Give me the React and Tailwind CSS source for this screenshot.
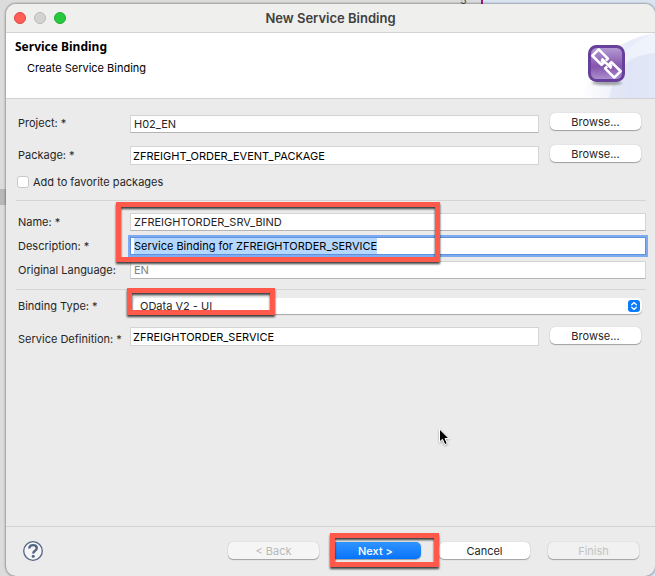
import { useEffect, useRef } from "react";

function Highlight({ className }) {
  return (
    <div
      aria-hidden="true"
      className={`pointer-events-none absolute z-10 border-5 border-[#ff594c] drop-shadow-[0_2px_1px_rgba(0,0,0,0.75)] ${className}`}
    />
  );
}

function Label({ htmlFor, children }) {
  return (
    <label htmlFor={htmlFor} className="w-[114px] shrink-0 self-center pl-0.5 whitespace-nowrap">
      {children}
    </label>
  );
}

function Field({ className = "", ...props }) {
  return (
    <input
      type="text"
      className={`min-w-0 flex-1 border border-[#d4d4d4] bg-white outline-none ${className}`}
      {...props}
    />
  );
}

function PushButton({ className = "bg-white text-[#262626]", ...props }) {
  return (
    <button
      type="button"
      className={`h-[17px] w-[91px] shrink-0 rounded-[5px] text-center leading-4 shadow-[0_1px_1px_rgba(0,0,0,0.3),0_0_1px_rgba(0,0,0,0.25)] ${className}`}
      {...props}
    />
  );
}

function BindingIcon() {
  return (
    <svg className="absolute top-0 right-0 h-full w-[76px]" viewBox="0 0 76 65" aria-hidden="true">
      <defs>
        <linearGradient id="wave" x1="0" x2="1">
          <stop offset="0" stopColor="#fff" />
          <stop offset="0.65" stopColor="#dfe5f6" />
          <stop offset="1" stopColor="#e9edf9" />
        </linearGradient>
        <linearGradient id="tile" x1="0" y1="0" x2="0" y2="1">
          <stop offset="0" stopColor="#b7a0d5" />
          <stop offset="0.5" stopColor="#8c60b4" />
          <stop offset="0.6" stopColor="#8656ad" />
          <stop offset="1" stopColor="#b096d3" />
        </linearGradient>
        <filter id="soft" x="-20%" y="-100%" width="140%" height="300%">
          <feGaussianBlur stdDeviation="1" />
        </filter>
      </defs>
      <path d="M2 65C8 35 36 6 76 0V65Z" fill="url(#wave)" opacity="0.75" />
      <path d="M30 65C35 38 50 22 76 20V65Z" fill="#d9e0f4" opacity="0.55" />
      <path d="M42 23C52 12 62 5 76 0V20C61 21 48 26 40 34Z" fill="#f0f3fc" opacity="0.7" />
      <ellipse cx="28" cy="50" rx="15" ry="2" fill="#777" opacity="0.7" filter="url(#soft)" />
      <rect x="10.5" y="13.5" width="34" height="34" rx="7" fill="url(#tile)" stroke="#67409b" strokeWidth="3" />
      <g fill="none" stroke="#fff" strokeWidth="2.6" strokeLinejoin="round" transform="translate(27.5 30.5) rotate(45)">
        <path d="M-6 1.5H-2.5V4.5H-15.5V-4.5H-2.5V-1.5" />
        <path d="M6 -1.5H2.5V-4.5H15.5V4.5H2.5V1.5" />
        <path d="M-7 0H7" />
      </g>
    </svg>
  );
}

export default function App() {
  const description = useRef(null);
  useEffect(() => {
    description.current.focus();
    description.current.select();
  }, []);

  return (
    <div className="relative min-h-screen overflow-hidden bg-[linear-gradient(90deg,#dcdcdc_0,#dcdcdc_481px,#dbe5f2_482px)] pt-1 pl-1.5 font-['Inter','Liberation_Sans',sans-serif] text-[11px] leading-4 text-[#262626]">
      <div className="absolute top-[189px] left-0 h-4 w-1.5 bg-[#b8b8b8]" />
      <div className="absolute top-0 left-[481px] h-1 w-0.5 bg-[#9b158f]" />
      <span className="absolute -top-2 left-[460px] text-[#555]">5</span>

      <main className="relative flex min-h-[calc(100vh-4px)] flex-col rounded-[10px] bg-[#ebebeb] shadow-[0_0_2px_1px_rgba(0,0,0,0.3)]">
        <header className="relative flex h-[29px] items-center justify-center rounded-t-[10px] border-b border-[#d2d2d2] bg-[#efefee] pb-px">
          <div className="absolute left-2 flex gap-2">
            <button type="button" aria-label="Close" className="size-3 rounded-full border border-[#e0443e] bg-[#ff5f57]" />
            <button type="button" aria-label="Minimize" className="size-3 rounded-full border border-[#bcbcbb] bg-[#d3d3d2]" />
            <button type="button" aria-label="Zoom" className="size-3 rounded-full border border-[#1dad2b] bg-[#28c840]" />
          </div>
          <h1 className="text-[13px] font-semibold text-[#404040]">New Service Binding</h1>
        </header>

        <section className="relative h-[66px] border-b border-[#d2d2d2] bg-white pt-1.5 pl-[9px] text-black">
          <h2 className="font-['Noto_Sans',sans-serif] text-xs leading-4 font-bold">Service Binding</h2>
          <p className="mt-[5px] pl-3">Create Service Binding</p>
          <BindingIcon />
        </section>

        <form className="flex-1 pt-3.5 pr-[9px] pl-2.5">
          <div className="mr-[5px] flex h-5">
            <Label htmlFor="project">Project: *</Label>
            <Field id="project" defaultValue="H02_EN" className="h-[18px] self-end border-b-[#b4b4b4] px-[3px]" />
            <PushButton className="ml-[11px] bg-white">Browse...</PushButton>
          </div>
          <div className="mt-3 mr-[5px] flex h-5">
            <Label htmlFor="package">Package: *</Label>
            <Field id="package" defaultValue="ZFREIGHT_ORDER_EVENT_PACKAGE" className="h-[19px] self-end px-0.5 text-black" />
            <PushButton className="ml-[11px] bg-white">Browse...</PushButton>
          </div>
          <div className="mt-2.5 flex h-3.5 items-center gap-1 pl-px">
            <input id="favorite" type="checkbox" className="size-3 appearance-none rounded-[3px] border border-[#c9c9c9] bg-white" />
            <label htmlFor="favorite">Add to favorite packages</label>
          </div>

          <hr className="mt-[11px] border-[#d4d4d4]" />

          <div className="relative mt-3 flex flex-col gap-1.5">
            <div className="flex h-[18px]">
              <Label htmlFor="name">Name: *</Label>
              <Field id="name" defaultValue="ZFREIGHTORDER_SRV_BIND" className="border-b-[#b4b4b4] px-[3px]" />
            </div>
            <div className="flex h-[18px]">
              <Label htmlFor="description">Description: *</Label>
              <input
                id="description"
                ref={description}
                type="text"
                defaultValue="Service Binding for ZFREIGHTORDER_SERVICE"
                className="min-w-0 flex-1 border border-[#5f92dc] bg-white px-[3px] text-black ring-2 ring-[#7daaf0] outline-none selection:bg-[#b3d7ff] selection:text-black"
              />
            </div>
            <div className="flex h-[18px]">
              <Label htmlFor="language">Original Language:</Label>
              <Field id="language" readOnly defaultValue="EN" className="border-b-[#b4b4b4] px-[3px] text-[#808080]" />
            </div>
            <Highlight className="-top-[11px] left-[100px] h-[60px] w-[324px]" />
          </div>

          <hr className="mt-2.5 border-[#d4d4d4]" />

          <div className="relative mt-2 mr-1 flex h-4 items-center">
            <Label htmlFor="binding">Binding Type: *</Label>
            <div className="relative ml-[3px] flex-1">
              <select
                id="binding"
                defaultValue="ui"
                className="block h-4 w-full appearance-none rounded-[5px] bg-white pl-[7px] leading-4 shadow-[0_1px_1px_rgba(0,0,0,0.3)] outline-none"
              >
                <option value="ui">OData V2 - UI</option>
              </select>
              <svg className="pointer-events-none absolute top-0.5 right-0.5 h-3 w-3" viewBox="0 0 12 12" aria-hidden="true">
                <rect width="12" height="12" rx="3" fill="#0a7bff" />
                <path d="M3.7 4.7L6 2.6l2.3 2.1M3.7 7.3L6 9.4l2.3-2.1" fill="none" stroke="#fff" strokeWidth="1.3" strokeLinecap="round" strokeLinejoin="round" />
              </svg>
            </div>
            <Highlight className="-top-2.5 left-[111px] h-[27px] w-[148px]" />
          </div>

          <div className="mt-[13px] mr-[5px] flex h-6">
            <Label htmlFor="definition">Service Definition: *</Label>
            <Field id="definition" defaultValue="ZFREIGHTORDER_SERVICE" className="h-[19px] px-0.5 text-black" />
            <PushButton className="ml-[11px] bg-white">Browse...</PushButton>
          </div>
        </form>

        <footer className="flex h-[50px] items-center border-t border-[#d2d2d2] pr-4 pb-0.5 pl-4">
          <button type="button" aria-label="Help" className="mr-auto">
            <svg className="size-[22px]" viewBox="0 0 22 22" aria-hidden="true">
              <circle cx="11" cy="11" r="9.3" fill="#f5f5f6" stroke="#536585" strokeWidth="1.3" />
              <path d="M7.3 8.5C7.3 6.2 8.8 5.1 11 5.1s3.8 1.1 3.8 3.1c0 2.6-3.6 2.6-3.6 5.2" fill="none" stroke="#536585" strokeWidth="2.4" />
              <circle cx="11.2" cy="16.2" r="1.5" fill="#536585" />
            </svg>
          </button>
          <div className="flex gap-[18px]">
            <div className="relative flex gap-[11px]">
              <PushButton disabled className="bg-[#f5f5f5] text-[#b9b9b9]">&lt; Back</PushButton>
              <PushButton className="bg-linear-to-b from-[#2f93ff] to-[#0574fa] font-medium text-white">Next &gt;</PushButton>
              <Highlight className="-top-[9px] left-[102px] h-[34px] w-[109px]" />
            </div>
            <PushButton>Cancel</PushButton>
            <PushButton disabled className="bg-[#f1f1f1] text-[#c2c2c2]">Finish</PushButton>
          </div>
        </footer>
      </main>

      <svg className="pointer-events-none absolute top-[428px] left-[438px] h-[19px] w-3.5 drop-shadow-[0_1px_1px_rgba(0,0,0,0.3)]" viewBox="0 0 14 19" aria-hidden="true">
        <path d="M1.5 1V14l3-2.7 2.3 5.3 2.5-1.1L7 10.5h4Z" fill="#000" stroke="#fff" strokeWidth="1" />
      </svg>
    </div>
  );
}
